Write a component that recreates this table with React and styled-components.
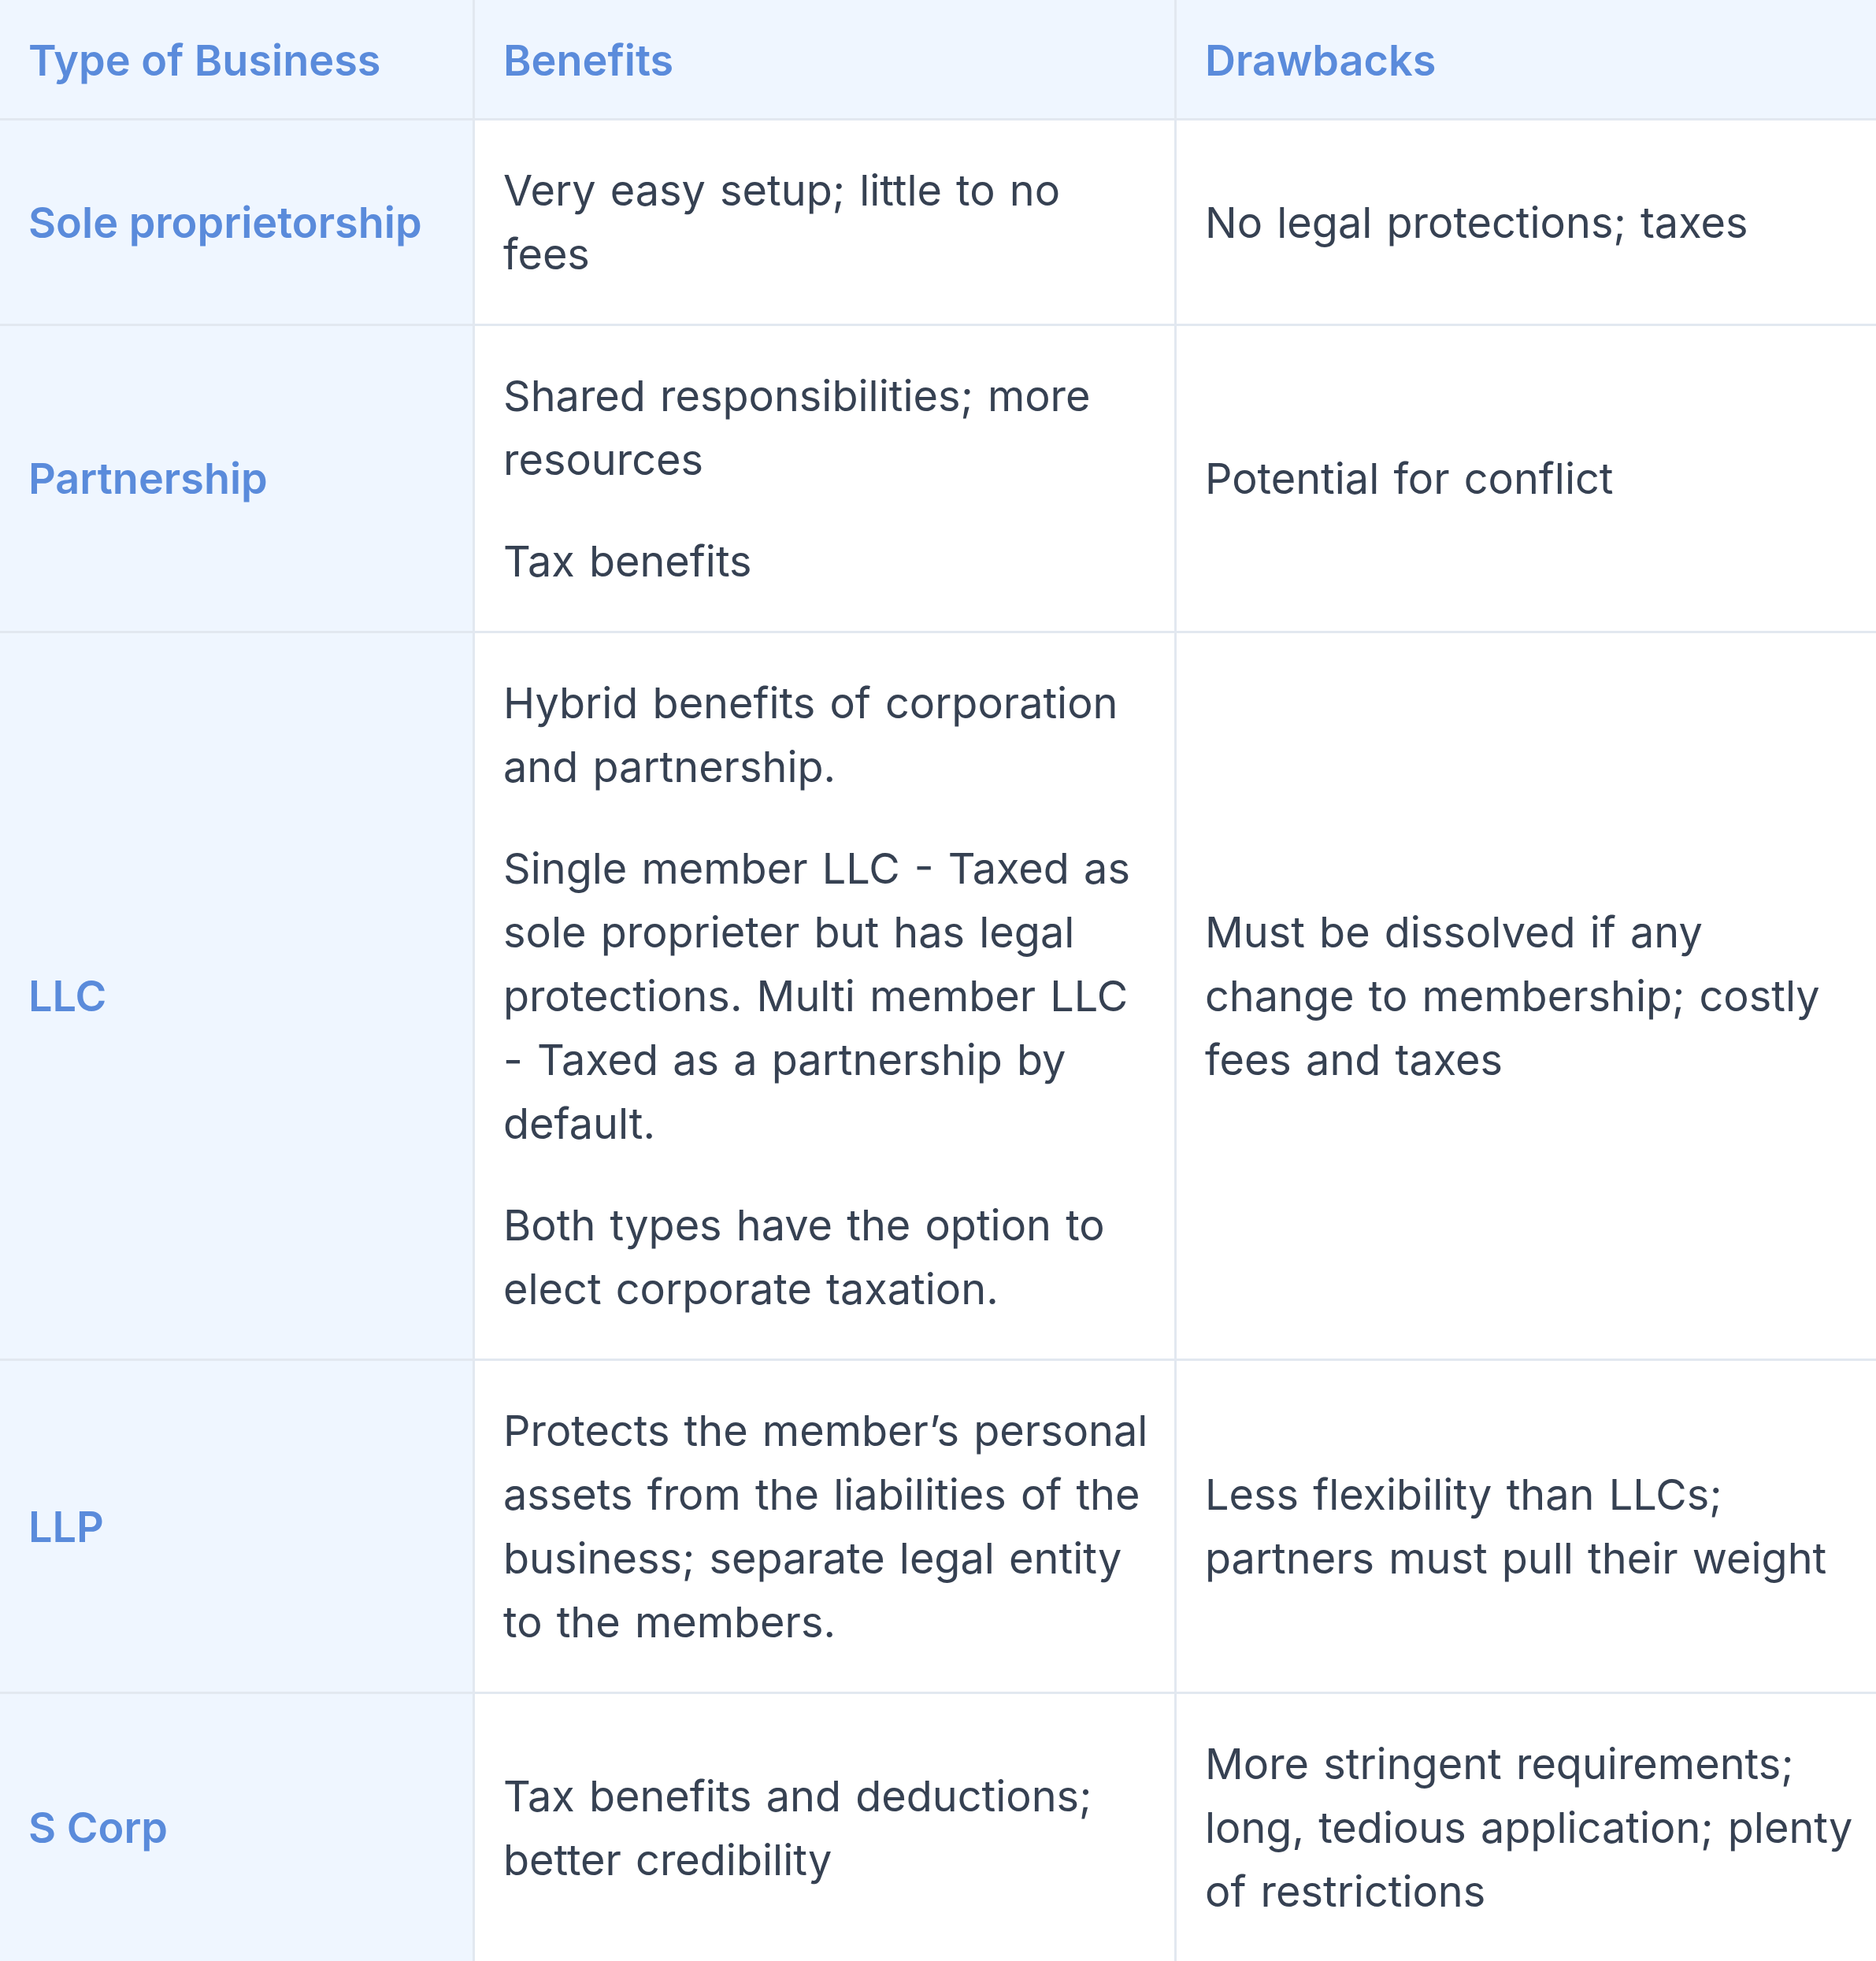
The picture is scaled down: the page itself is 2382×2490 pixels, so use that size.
import React from "react";
import styled, { createGlobalStyle } from "styled-components";

const GlobalStyle = createGlobalStyle`
  body {
    margin: 0;
    background: #ffffff;
    font-family: Inter, "Noto Sans", "Liberation Sans", sans-serif;
  }
`;

const Table = styled("div")`
  width: 2382px;
  display: flex;
  flex-direction: column;
  font-size: 54px;
  line-height: 81px;
`;

const Row = styled("div")`
  display: grid;
  grid-template-columns: 603px 891px 888px;
  border-bottom: ${(p) => (p.$last ? "none" : "3px solid #e2e8f0")};
  background: ${(p) => (p.$head ? "#eff6ff" : "#ffffff")};
`;

const Cell = styled("div")`
  box-sizing: border-box;
  display: flex;
  flex-direction: column;
  justify-content: center;
  padding: ${(p) => (p.$head ? "36px 30px 33px 36px" : "48px 28px 48px 36px")};
  border-right: ${(p) => (p.$end ? "none" : "3px solid #e2e8f0")};
  background: ${(p) => (p.$label || p.$head ? "#eff6ff" : "transparent")};
  color: ${(p) => (p.$label || p.$head ? "#5a8bdb" : "#364152")};
  font-weight: ${(p) => (p.$label || p.$head ? 600 : 400)};
  word-spacing: ${(p) => (p.$label || p.$head ? "0" : "3px")};

  &:last-child {
    padding-right: 18px;
  }
`;

const Para = styled("p")`
  margin: 0;
  & + & {
    margin-top: 48px;
  }
`;

const rows = [
  {
    type: "Sole proprietorship",
    benefits: ["Very easy setup; little to no fees"],
    drawbacks: ["No legal protections; taxes"],
  },
  {
    type: "Partnership",
    benefits: ["Shared responsibilities; more resources", "Tax benefits"],
    drawbacks: ["Potential for conflict"],
  },
  {
    type: "LLC",
    benefits: [
      "Hybrid benefits of corporation and partnership.",
      "Single member LLC - Taxed as sole proprieter but has legal protections. Multi member LLC - Taxed as a partnership by default.",
      "Both types have the option to elect corporate taxation.",
    ],
    drawbacks: [
      "Must be dissolved if any change to membership; costly fees and taxes",
    ],
  },
  {
    type: "LLP",
    benefits: [
      "Protects the member\u2019s personal assets from the liabilities of the business; separate legal entity to the members.",
    ],
    drawbacks: [
      "Less flexibility than LLCs; partners must pull their weight",
    ],
  },
  {
    type: "S Corp",
    benefits: ["Tax benefits and deductions; better credibility"],
    drawbacks: [
      "More stringent requirements; long, tedious application; plenty of restrictions",
    ],
  },
];

export default function App() {
  return (
    <>
      <GlobalStyle />
      <Table>
        <Row $head>
          <Cell $head>Type of Business</Cell>
          <Cell $head>Benefits</Cell>
          <Cell $head $end>
            Drawbacks
          </Cell>
        </Row>
        {rows.map((r, i) => (
          <Row key={r.type} $last={i === rows.length - 1}>
            <Cell $label>{r.type}</Cell>
            <Cell>
              {r.benefits.map((t) => (
                <Para key={t}>{t}</Para>
              ))}
            </Cell>
            <Cell $end>
              {r.drawbacks.map((t) => (
                <Para key={t}>{t}</Para>
              ))}
            </Cell>
          </Row>
        ))}
      </Table>
    </>
  );
}
